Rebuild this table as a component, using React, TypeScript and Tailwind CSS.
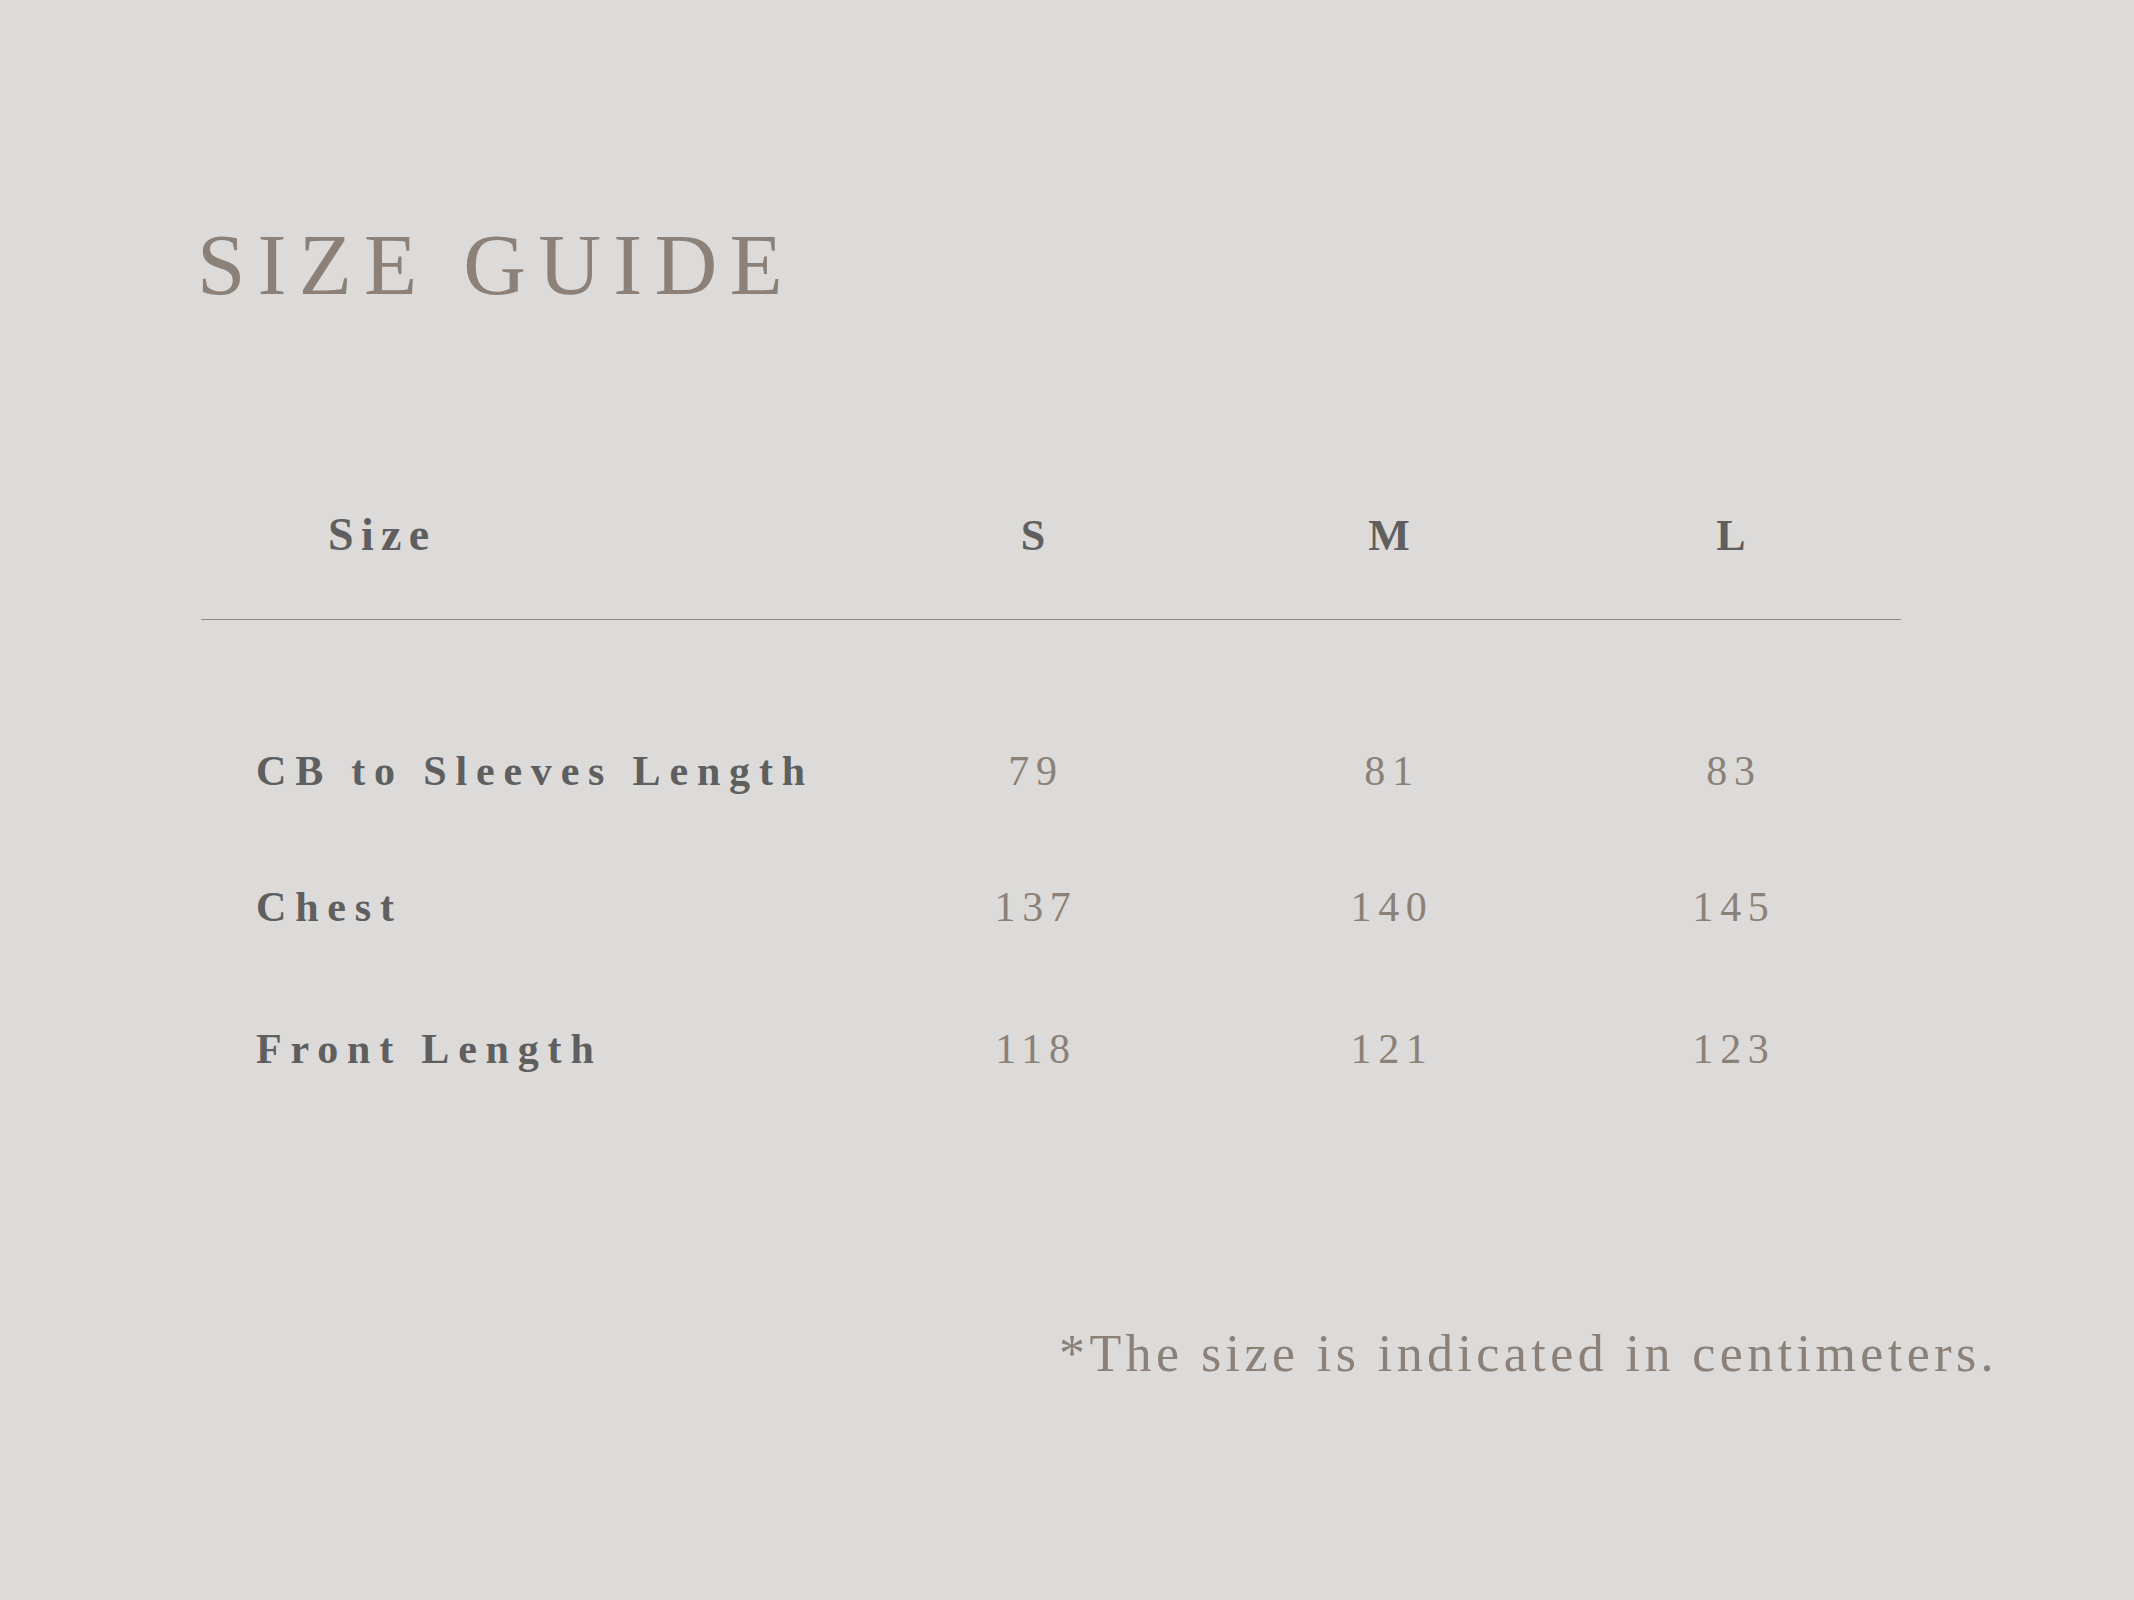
const SIZES = ["S", "M", "L"];

const ROWS = [
  { label: "CB to Sleeves Length", values: ["79", "81", "83"], spacing: "mt-[130px]" },
  { label: "Chest", values: ["137", "140", "145"], spacing: "mt-[94px]" },
  { label: "Front Length", values: ["118", "121", "123"], spacing: "mt-[100px]" },
];

const GRID = "grid grid-cols-[654px_356px_356px_328px] items-baseline";

export default function App() {
  return (
    <div className="min-h-screen w-full bg-[#dcdbd9] font-['Liberation_Serif',_'Times_New_Roman',_serif]">
      <div className="pt-[221px] pl-[197px]">
        <h1 className="text-[87px] leading-none tracking-[0.14em] text-[#8b8178]">SIZE GUIDE</h1>
      </div>

      <div className="mt-[204px] ml-[201px] w-[1700px]">
        <div className={`${GRID} border-b border-[#8f8a85] pb-[61px]`}>
          <div className="pl-[127px] text-[46px] font-bold leading-none tracking-[0.16em] text-[#5f5f5f]">
            Size
          </div>
          {SIZES.map((s) => (
            <div key={s} className="text-center text-[44px] font-bold leading-none text-[#5f5f5f]">
              {s}
            </div>
          ))}
        </div>

        {ROWS.map((row) => (
          <div key={row.label} className={`${GRID} ${row.spacing}`}>
            <div className="pl-[55px] text-[42px] font-bold leading-none tracking-[0.21em] text-[#5f5f5f]">
              {row.label}
            </div>
            {row.values.map((v, i) => (
              <div
                key={i}
                className="pl-[6px] text-center text-[42px] leading-none tracking-[0.16em] text-[#8b8178]"
              >
                {v}
              </div>
            ))}
          </div>
        ))}
      </div>

      <div className="mt-[258px] flex justify-end pr-[136px]">
        <p className="text-[52px] leading-none tracking-[0.085em] text-[#8b8178]">
          *The size is indicated in centimeters.
        </p>
      </div>
    </div>
  );
}
